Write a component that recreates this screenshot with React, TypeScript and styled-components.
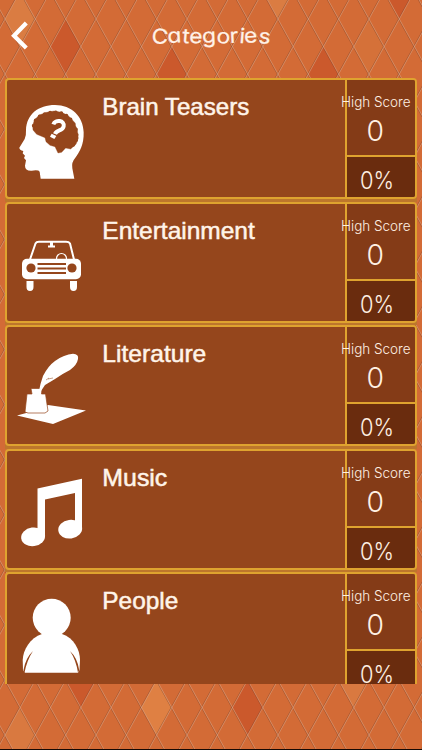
import React from 'react';
import styled, { createGlobalStyle } from 'styled-components';

const Global = createGlobalStyle`
  * { box-sizing: border-box; }
  body { margin: 0; background: #d36b36; overflow: hidden; }
`;

const Screen = styled.main`
  position: relative;
  width: 422px;
  height: 750px;
  overflow: hidden;
  color: #fff4e9;
  font-family: "Liberation Sans", Arial, sans-serif;
  border-bottom: 1px solid #160904;
`;

const Backdrop = styled.svg`
  position: absolute;
  inset: 0;
  display: block;
`;

const Header = styled.header`
  position: relative;
  height: 78px;
  display: grid;
  grid-template-columns: 60px 1fr 60px;
  align-items: start;
`;

const BackButton = styled.button`
  border: 0;
  padding: 20px 0 0 10px;
  background: none;
  text-align: left;
  line-height: 0;
`;

const Title = styled.h1`
  margin: 21px 0 0;
  height: 30px;
  text-align: center;
`;

const TitleText = styled.text`
  font-family: Inter, sans-serif;
  font-size: 20.5px;
  font-weight: 400;
  font-feature-settings: "cv11";
  fill: #fff2e8;
  stroke: #fff2e8;
  stroke-width: 0.2px;
`;

const List = styled.section`
  position: relative;
  height: 606px;
  margin: 0 5px;
  overflow: hidden;
  display: flex;
  flex-direction: column;
`;

const Card = styled.article`
  flex: 0 0 123.5px;
  padding-bottom: 2.5px;
  background: linear-gradient(#bd762c, #bd762c) left bottom / 100% 5px no-repeat;
`;

const CardBody = styled.div`
  height: 121px;
  display: grid;
  grid-template-columns: 338px 1fr;
  border: 2px solid #dfa32f;
  border-radius: 4px;
  background: #95461c;
  overflow: hidden;
`;

const Main = styled.div`
  display: grid;
  grid-template-columns: 95px 1fr;
`;

const Art = styled.svg`
  display: block;
  width: 95px;
  height: 117px;
  overflow: visible;
`;

const Name = styled.h2`
  margin: 12px 0 0;
  font-size: 24px;
  line-height: 30px;
  font-weight: 400;
`;

const NameText = styled.text`
  fill: #fff4e9;
  stroke: #fff4e9;
  stroke-width: 0.5px;
`;

const Score = styled.div`
  display: grid;
  grid-template-rows: 77px 1fr;
  border-left: 2px solid #dfa32f;
`;

const High = styled.div`
  background: #843b17;
  border-bottom: 2px solid #dfa32f;
`;

const Percent = styled.div`
  background: #6a2c0e;
`;

const Value = styled.svg`
  display: block;
  overflow: visible;
  position: relative;
  fill: #fff0e3;
  font-family: Inter, "Liberation Sans", sans-serif;
  font-weight: 300;
`;

const W = 30.33;
const H = 27.54;

const diamonds: [number, number, string][] = [
  [20.2, 19, '#da7c42'], [65.6, 47, '#cb592c'], [172, 74, '#cb592c'],
  [278, -9, '#da7c42'], [399.6, -9, '#cb592c'], [369, 47, '#d57139'],
  [323.6, 74, '#cb592c'], [156.5, 707.5, '#df8043'], [20.2, 735, '#d97940'],
  [247.8, 707.5, '#cb592c'], [80.9, 680, '#cb592c'], [353.8, 680, '#d97940'],
];

const run = (750 / (2 * H)) * W;
const top = (19 / (2 * H)) * W;
const falling = Array.from({ length: 30 }, (_, i) => {
  const x = 5 - top + (i - 15) * W;
  return `M${x} 0L${x + run} 750`;
}).join('');
const rising = Array.from({ length: 30 }, (_, i) => {
  const x = 5 + top + i * W;
  return `M${x} 0L${x - run} 750`;
}).join('');

const Lattice = () => (
  <Backdrop width="422" height="750" aria-hidden="true">
    <rect width="422" height="750" fill="#d36b36" />
    {diamonds.map(([x, y, c]) => (
      <path key={`${x}-${y}`} fill={c} d={`M${x} ${y - H}l${W / 2} ${H}l${-W / 2} ${H}l${-W / 2} ${-H}z`} />
    ))}
    <g fill="none" strokeWidth=".7">
      <path d={falling + rising} stroke="#7d4228" opacity=".65" transform="translate(-.7 0)" />
      <path d={falling + rising} stroke="#e0b499" opacity=".65" />
    </g>
  </Backdrop>
);

const Brain = () => (
  <g transform="translate(-7 -5) scale(.3333)">
    <path fill="#fff" d="M165 90C215 90 250 125 251 172C252 208 240 230 225 250Q214 262 217 280L223 311H122L119 290Q116 284 95 287Q75 288 75 272L78 256L72 249L75 242L68 235L70 228Q58 225 58 218L74 192Q79 180 78 165C80 118 115 90 165 90Z" />
    <path fill="#95461c" stroke="#95461c" strokeLinejoin="round" d="M98 152L103 135L118 120L140 112L162 108L185 112L205 122L222 140L232 165L235 190L228 208L212 222L197 219L185 232L174 234L165 215L150 211L138 200L135 188L110 178L99 165Z" />
    <path fill="none" stroke="#95461c" strokeWidth="11" strokeLinecap="round" strokeDasharray="0 17" d="M101 152L106 137L120 123L142 114L162 111L183 114L203 124L219 141L229 165L231 190L225 205L211 218" />
    <path fill="none" stroke="#fff" strokeWidth="12" d="M160 148C166 132 195 136 191 154C188 169 170 163 165 177" />
    <path fill="#fff" d="M155 176l14 7-6 9-13-7z" />
  </g>
);

const Car = () => (
  <g transform="translate(-7 -203.5)">
    <path fill="none" stroke="#fff" strokeWidth="2" strokeLinejoin="round" d="M30 259L35.5 243Q36.3 241.3 39 241.3H66Q69 241.3 70 243L74 259" />
    <path fill="#fff" d="M50 241h3v4h2v2h-7v-2h2z" />
    <circle cx="61.5" cy="258" r="5" fill="none" stroke="#fff" strokeWidth="1.2" />
    <rect x="22" y="258.3" width="59" height="20.5" rx="5" fill="#fff" />
    <g fill="#95461c"><circle cx="31" cy="267.5" r="4.6" /><circle cx="72" cy="267.5" r="4.6" /><path d="M37.5 262.5h28.5v2H37.5zM37.5 267h28.5v2H37.5zM37.5 271.5h28.5v2H37.5z" /></g>
    <path fill="#fff" d="M26.5 280.5h7v6q0 4-3.5 4t-3.5-4zM70 280.5h7v6q0 4-3.5 4t-3.5-4z" />
  </g>
);

const Quill = () => (
  <g transform="translate(-7 -327)">
    <path fill="#fff" d="M17 415.5L30 412L48 405L86 410.5L53 424Z" />
    <path fill="#fff" stroke="#95461c" strokeWidth=".7" d="M25 412L27 394H32L31 388.5H42L41.5 394H45.5L48 411L45 413H28Z" />
    <path fill="#fff" d="M39 391L40.5 384L43 376Q48 366 55 361Q64 354.5 73 353.8Q79 354 78 359Q77 365 70 370Q62 374 55 379L45 385L41 391Z" />
    <path fill="none" stroke="#95461c" strokeWidth=".5" d="M46 380L49 378M48 379L53 378" />
  </g>
);

const Note = () => (
  <g fill="#fff" transform="translate(-7 -450.5)">
    <path d="M37.5 488L82 478.3V529H75V492.5L45 499V536H37.5Z" />
    <ellipse cx="33.1" cy="536.3" rx="12" ry="9.3" transform="rotate(-8 33.1 536.3)" />
    <ellipse cx="70.2" cy="528.7" rx="12" ry="9.3" transform="rotate(-8 70.2 528.7)" />
  </g>
);

const Person = () => (
  <g transform="translate(-7 -574)">
    <circle cx="51.7" cy="617.8" r="19" fill="#fff" />
    <path fill="#fff" d="M42 634H62C74 638 80 650 80 660L79.5 670L78 672.7H25L23 670L22.7 660C23 650 30 638 42 634Z" />
    <path fill="#95461c" d="M33 651Q25.5 658 23.5 670L24.5 672.7Q27 660 33 651ZM70 651Q77.5 658 79.2 670L78 672.7Q76 660 70 651Z" />
  </g>
);

const rows = [
  { name: 'Brain Teasers', width: 147, Icon: Brain },
  { name: 'Entertainment', width: 152.5, Icon: Car },
  { name: 'Literature', width: 104, Icon: Quill },
  { name: 'Music', width: 65, Icon: Note },
  { name: 'People', width: 76, Icon: Person },
];

export default function App() {
  return (
    <Screen>
      <Global />
      <Lattice />
      <Header>
        <BackButton aria-label="Back">
          <svg width="22" height="32" viewBox="0 0 22 32" fill="none" stroke="#fff" strokeWidth="4.2">
            <path d="M16.3 3L4 15.8L16.3 28" />
          </svg>
        </BackButton>
        <Title>
          <svg width="122" height="30" overflow="visible" aria-label="Categories">
            <TitleText x="1" y="22" textLength="119" lengthAdjust="spacingAndGlyphs" rotate="5 -3 4 2 -2 3 -3 4 -4 5">Categories</TitleText>
          </svg>
        </Title>
      </Header>
      <List>
        {rows.map(({ name, width, Icon }) => (
          <Card key={name}>
            <CardBody>
              <Main>
                <Art><Icon /></Art>
                <Name>
                  <svg width="180" height="30" overflow="visible">
                    <NameText x="0.3" y="22.7" textLength={width} lengthAdjust="spacingAndGlyphs">{name}</NameText>
                  </svg>
                </Name>
              </Main>
              <Score>
                <High>
                  <Value width="68" height="75">
                    <text x="-6" y="26.7" fontSize="14" textLength="69.5" lengthAdjust="spacingAndGlyphs">High Score</text>
                    <text x="19.5" y="60.6" fontSize="28.5" textLength="17.5" lengthAdjust="spacingAndGlyphs">0</text>
                  </Value>
                </High>
                <Percent>
                  <Value width="68" height="39">
                    <text x="13" y="32" fontSize="23.5" textLength="34" lengthAdjust="spacingAndGlyphs">0%</text>
                  </Value>
                </Percent>
              </Score>
            </CardBody>
          </Card>
        ))}
      </List>
    </Screen>
  );
}
